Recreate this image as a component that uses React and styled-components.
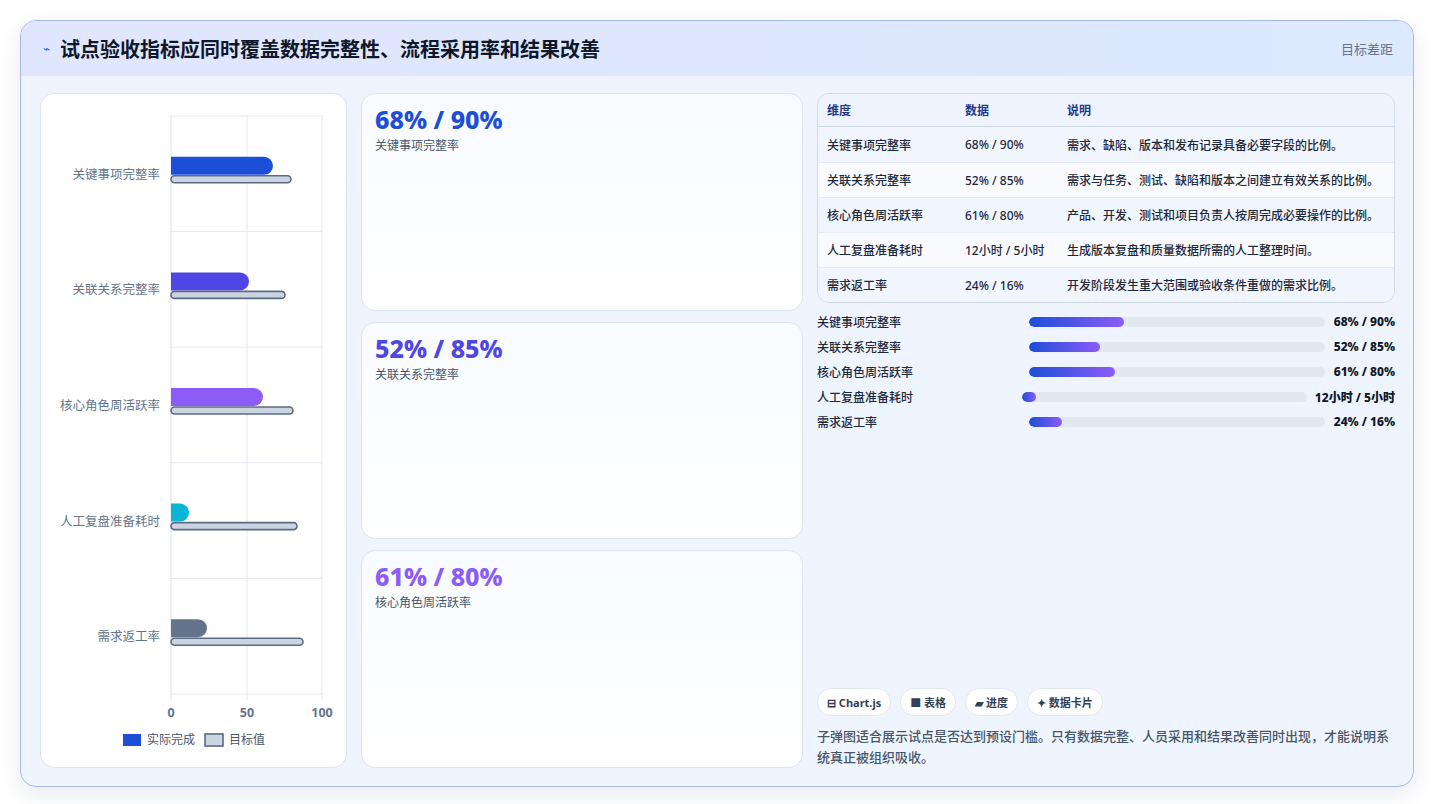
import React from "react";
import styled, { createGlobalStyle } from "styled-components";

const Global = createGlobalStyle`
  html, body { margin: 0; padding: 0; background: #fff; }
  body { font-family: "Noto Sans", "Noto Sans CJK SC", sans-serif; }
  * { box-sizing: border-box; }
`;

const Page = styled.div`
  width: 1435px; height: 804px; padding: 20px 21px 17px 20px;
`;
const Frame = styled.div`
  height: 100%; border: 1px solid #a9b8e6; border-radius: 16px; overflow: hidden;
  background: linear-gradient(180deg, #eef3fe 0%, #eff5fe 100%);
  box-shadow: 0 8px 22px rgba(30, 50, 100, 0.10);
  display: flex; flex-direction: column;
`;
const Header = styled.div`
  height: 55px; flex: none; display: flex; align-items: center; justify-content: space-between;
  padding: 0 20px 0 22px;
  background: linear-gradient(90deg, #e0e6fd 0%, #dce9fe 100%);
`;
const Title = styled.h1`
  margin: 0; font-size: 20px; font-weight: 700; color: #0f172a; display: flex; align-items: center; gap: 10px;
`;
const Bolt = styled.span` color: #2563eb; font-size: 12px; font-weight: 400; `;
const HeaderNote = styled.span` font-size: 13px; color: #64748b; `;
const Body = styled.div`
  flex: 1; display: grid; grid-template-columns: 307px 442px 1fr; gap: 14px;
  padding: 17px 18px 18px 19px; min-height: 0;
`;
const Panel = styled.div`
  background: #fff; border: 1px solid #dde5f2; border-radius: 14px; overflow: hidden;
`;
const Cards = styled.div` display: grid; grid-template-rows: repeat(3, 1fr); gap: 11px; `;
const Card = styled.div`
  background: linear-gradient(180deg, #f8fbff 0%, #ffffff 100%);
  border: 1px solid #dde5f2; border-radius: 14px; padding: 10px 13px;
`;
const Big = styled.div` font-size: 25px; font-weight: 800; color: ${p => p.$c}; line-height: 30px; `;
const CardLabel = styled.div` font-size: 12px; color: #475569; margin-top: 2px; `;
const Right = styled.div` display: flex; flex-direction: column; min-height: 0; `;
const Table = styled.table`
  width: 100%; border-collapse: separate; border-spacing: 0; font-size: 12px;
  border: 1px solid #cfd9ea; border-radius: 12px; overflow: hidden;
`;
const Th = styled.th`
  text-align: left; font-weight: 700; color: #1e3a8a; height: 33px; padding: 0 9px;
  background: #eef3fd; border-bottom: 1px solid #cfd9ea;
`;
const Td = styled.td`
  height: 35px; padding: 0 9px; color: #1e293b; font-weight: 500;
  background: ${p => (p.$odd ? "#f1f5fe" : "#f8fafe")};
  border-top: ${p => (p.$first ? "none" : "1px solid #e5ebf5")};
`;
const Progress = styled.div` display: flex; flex-direction: column; gap: 6px; margin-top: 9px; `;
const PRow = styled.div` display: flex; align-items: center; gap: 8px; height: 19px; font-size: 12px; `;
const PLabel = styled.div` flex: 1 1 0; color: #1e293b; font-weight: 500; white-space: nowrap; `;
const Track = styled.div` flex: 1.45 1 0; height: 10px; border-radius: 5px; background: #e2e8f0; overflow: hidden; `;
const Fill = styled.div` height: 100%; border-radius: 5px; background: linear-gradient(90deg, #1d4ed8, #8b5cf6); `;
const PVal = styled.div` font-weight: 800; color: #0f172a; white-space: nowrap; min-width: 62px; text-align: right; `;
const Footer = styled.div` margin-top: auto; `;
const Chips = styled.div` display: flex; gap: 9px; `;
const Chip = styled.span`
  height: 28px; padding: 0 9px; display: inline-flex; align-items: center; gap: 3px;
  background: #fff; border: 1px solid #e2e8f0; border-radius: 14px; font-size: 11px; font-weight: 700; color: #334155;
`;
const Note = styled.p` margin: 10px 0 0; font-size: 13px; line-height: 21px; color: #475569; font-weight: 500; `;

const rows = [
  ["关键事项完整率", "68% / 90%", "需求、缺陷、版本和发布记录具备必要字段的比例。", 32],
  ["关联关系完整率", "52% / 85%", "需求与任务、测试、缺陷和版本之间建立有效关系的比例。", 24],
  ["核心角色周活跃率", "61% / 80%", "产品、开发、测试和项目负责人按周完成必要操作的比例。", 29],
  ["人工复盘准备耗时", "12小时 / 5小时", "生成版本复盘和质量数据所需的人工整理时间。", 5],
  ["需求返工率", "24% / 16%", "开发阶段发生重大范围或验收条件重做的需求比例。", 11],
];

const bars = [
  { a: 102, t: 120, c: "#1d4ed8" },
  { a: 78, t: 114, c: "#4f46e5" },
  { a: 92, t: 122, c: "#8b5cf6" },
  { a: 18, t: 126, c: "#06b6d4" },
  { a: 36, t: 132, c: "#64748b" },
];

function Chart() {
  const x0 = 130, top = 22, bottom = 600, step = (bottom - top) / 5;
  return (
    <svg width="307" height="675" viewBox="0 0 307 675" style={{ display: "block" }}>
      {[0, 1, 2, 3, 4, 5].map(i => (
        <line key={"h" + i} x1={x0 - 2} x2={281} y1={top + i * step} y2={top + i * step} stroke="#e5e9f0" />
      ))}
      {[x0, 206, 281].map(x => (
        <line key={"v" + x} x1={x} x2={x} y1={top} y2={bottom + 6} stroke={x === x0 ? "#d6dce6" : "#e5e9f0"} />
      ))}
      {rows.map((r, i) => {
        const cy = top + step * i + step / 2 + 1;
        const b = bars[i];
        return (
          <g key={i}>
            <text x={119} y={cy + 4} textAnchor="end" fontSize="12.5" fill="#64748b" fontFamily="Noto Sans CJK SC, sans-serif">{r[0]}</text>
            <path d={`M${x0} ${cy - 18} H${x0 + b.a - 9} A9 9 0 0 1 ${x0 + b.a} ${cy - 9} A9 9 0 0 1 ${x0 + b.a - 9} ${cy} H${x0} Z`} fill={b.c} />
            <rect x={x0} y={cy + 1} width={b.t} height={7} rx={3.5} fill="#cbd5e1" stroke="#5b6b84" strokeWidth="1.6" />
          </g>
        );
      })}
      {[[x0, "0"], [206, "50"], [281, "100"]].map(([x, t]) => (
        <text key={t} x={x} y={623} textAnchor="middle" fontSize="12.5" fontWeight="700" fill="#64748b" fontFamily="Noto Sans, sans-serif">{t}</text>
      ))}
      <rect x={82} y={640} width={18} height={12} fill="#1d4ed8" />
      <text x={106} y={650} fontSize="12" fill="#475569" fontFamily="Noto Sans CJK SC, sans-serif">实际完成</text>
      <rect x={164} y={640} width={18} height={12} fill="#cbd5e1" stroke="#5b6b84" strokeWidth="1.6" />
      <text x={188} y={650} fontSize="12" fill="#475569" fontFamily="Noto Sans CJK SC, sans-serif">目标值</text>
    </svg>
  );
}

export default function App() {
  return (
    <Page>
      <Global />
      <Frame>
        <Header>
          <Title><Bolt>⌁</Bolt>试点验收指标应同时覆盖数据完整性、流程采用率和结果改善</Title>
          <HeaderNote>目标差距</HeaderNote>
        </Header>
        <Body>
          <Panel><Chart /></Panel>
          <Cards>
            <Card><Big $c="#1d4ed8">68% / 90%</Big><CardLabel>关键事项完整率</CardLabel></Card>
            <Card><Big $c="#4f46e5">52% / 85%</Big><CardLabel>关联关系完整率</CardLabel></Card>
            <Card><Big $c="#8b5cf6">61% / 80%</Big><CardLabel>核心角色周活跃率</CardLabel></Card>
          </Cards>
          <Right>
            <Table>
              <thead>
                <tr><Th style={{ width: 138 }}>维度</Th><Th style={{ width: 102 }}>数据</Th><Th>说明</Th></tr>
              </thead>
              <tbody>
                {rows.map((r, i) => (
                  <tr key={i}>
                    <Td $odd={i % 2 === 0} $first={i === 0}>{r[0]}</Td>
                    <Td $odd={i % 2 === 0} $first={i === 0}>{r[1]}</Td>
                    <Td $odd={i % 2 === 0} $first={i === 0}>{r[2]}</Td>
                  </tr>
                ))}
              </tbody>
            </Table>
            <Progress>
              {rows.map((r, i) => (
                <PRow key={i}>
                  <PLabel>{r[0]}</PLabel>
                  <Track><Fill style={{ width: r[3] + "%" }} /></Track>
                  <PVal>{r[1]}</PVal>
                </PRow>
              ))}
            </Progress>
            <Footer>
              <Chips>
                <Chip>⊟ Chart.js</Chip>
                <Chip>■ 表格</Chip>
                <Chip>▰ 进度</Chip>
                <Chip>✦ 数据卡片</Chip>
              </Chips>
              <Note>子弹图适合展示试点是否达到预设门槛。只有数据完整、人员采用和结果改善同时出现，才能说明系统真正被组织吸收。</Note>
            </Footer>
          </Right>
        </Body>
      </Frame>
    </Page>
  );
}
